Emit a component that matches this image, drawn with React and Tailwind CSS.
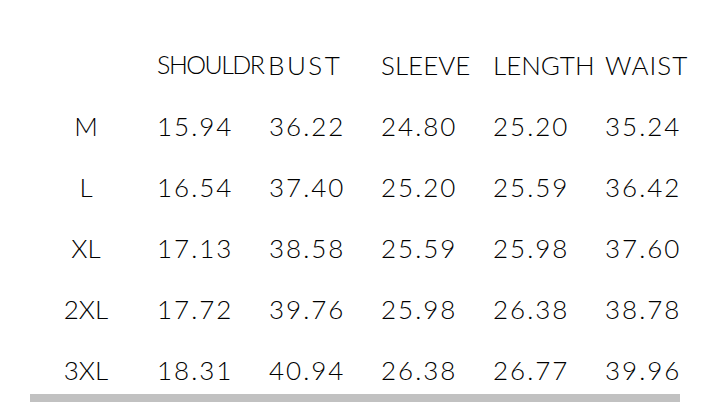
import React from "react";

const rows = [
  ["M", "15.94", "36.22", "24.80", "25.20", "35.24"],
  ["L", "16.54", "37.40", "25.20", "25.59", "36.42"],
  ["XL", "17.13", "38.58", "25.59", "25.98", "37.60"],
  ["2XL", "17.72", "39.76", "25.98", "26.38", "38.78"],
  ["3XL", "18.31", "40.94", "26.38", "26.77", "39.96"],
];

export default function App() {
  return (
    <div
      className="w-[720px] h-[405px] bg-white overflow-hidden text-black"
      style={{ fontFamily: "Lato, 'Liberation Sans', sans-serif" }}
    >
      <div className="pl-[30px] pt-[34px]">
        <div className="grid grid-cols-[112px_repeat(5,112px)] w-[672px] text-[26px] leading-none font-light">
          <div className="h-[61px]" />
          <div className="h-[61px] flex items-center pl-[15px] whitespace-nowrap text-[25px] tracking-[-1.5px]">
            SHOULDR
          </div>
          <div className="h-[61px] flex items-center pl-[14px] whitespace-nowrap tracking-[2.5px]">
            BUST
          </div>
          <div className="h-[61px] flex items-center pl-[15px] whitespace-nowrap">SLEEVE</div>
          <div className="h-[61px] flex items-center pl-[15px] whitespace-nowrap">LENGTH</div>
          <div className="h-[61px] flex items-center pl-[15px] whitespace-nowrap tracking-[1px]">WAIST</div>
          {rows.map((r) =>
            r.map((c, j) => (
              <div
                key={r[0] + j}
                className={
                  j === 0
                    ? "h-[61px] flex items-center justify-center"
                    : "h-[61px] flex items-center pl-[15px] tracking-[2px]"
                }
              >
                {c}
              </div>
            ))
          )}
        </div>
        <div className="relative -mt-[6px] h-[8px] w-[650px] bg-[#c1c1c1]" />
      </div>
    </div>
  );
}
